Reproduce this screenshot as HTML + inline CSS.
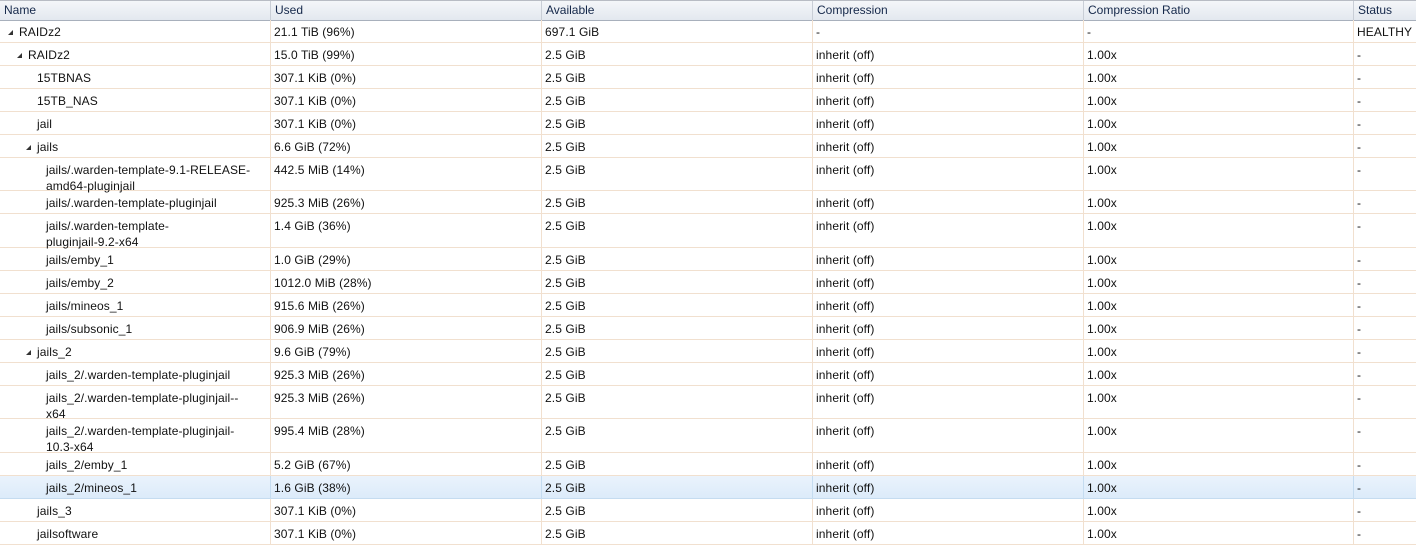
<!DOCTYPE html>
<html><head><meta charset="utf-8"><style>
body{margin:0;width:1416px;height:552px;background:#fff;overflow:hidden;font-family:"Liberation Sans",sans-serif;font-size:12px;color:#111;}
.hdr{position:absolute;left:0;top:0;width:1416px;height:19px;background:linear-gradient(#f4f6f9,#e3e8ef);border-top:1px solid #b8bcc4;border-bottom:1px solid #a8b0bc;}
.hdr div{position:absolute;top:0;height:19px;line-height:19px;color:#15284a;padding-left:4px;border-left:1px solid #c9ced6;box-sizing:border-box;font-family:"Liberation Sans",sans-serif;font-size:12px;}
.r{position:absolute;left:0;width:1416px;border-bottom:1px solid #f1e0cf;box-sizing:border-box;}
.r div{position:absolute;top:0;bottom:0;padding-top:4px;line-height:16px;padding-left:3px;border-left:1px solid #f1e0cf;box-sizing:border-box;font-family:"Liberation Sans",sans-serif;font-size:12px;letter-spacing:0.1px;}
.r div.n{border-left:none;padding-left:0}
.c0{left:0;width:270px}.c1{left:270px;width:271px}.c2{left:541px;width:271px}.c3{left:812px;width:271px}.c4{left:1083px;width:270px}.c5{left:1353px;width:63px}
.sel{background:linear-gradient(#eaf3fc,#dcebfa);border-bottom-color:#c5dcf0}
.sel div{border-left-color:#c5dcf0}
.a{display:inline-block;width:0;height:0;border-left:5px solid transparent;border-bottom:5px solid #333;margin-right:6px;vertical-align:1px}
</style></head><body>
<div class="hdr"><div class="c0" style="border-left:none">Name</div><div class="c1">Used</div><div class="c2">Available</div><div class="c3">Compression</div><div class="c4">Compression Ratio</div><div class="c5">Status</div></div>

<div class="r" style="top:20px;height:23px"><div class="n c0" style="padding-left:8px"><span class="a"></span>RAIDz2</div><div class="c1">21.1 TiB (96%)</div><div class="c2">697.1 GiB</div><div class="c3">-</div><div class="c4">-</div><div class="c5">HEALTHY</div></div>
<div class="r" style="top:43px;height:23px"><div class="n c0" style="padding-left:17px"><span class="a"></span>RAIDz2</div><div class="c1">15.0 TiB (99%)</div><div class="c2">2.5 GiB</div><div class="c3">inherit (off)</div><div class="c4">1.00x</div><div class="c5">-</div></div>
<div class="r" style="top:66px;height:23px"><div class="n c0" style="padding-left:37px">15TBNAS</div><div class="c1">307.1 KiB (0%)</div><div class="c2">2.5 GiB</div><div class="c3">inherit (off)</div><div class="c4">1.00x</div><div class="c5">-</div></div>
<div class="r" style="top:89px;height:23px"><div class="n c0" style="padding-left:37px">15TB_NAS</div><div class="c1">307.1 KiB (0%)</div><div class="c2">2.5 GiB</div><div class="c3">inherit (off)</div><div class="c4">1.00x</div><div class="c5">-</div></div>
<div class="r" style="top:112px;height:23px"><div class="n c0" style="padding-left:37px">jail</div><div class="c1">307.1 KiB (0%)</div><div class="c2">2.5 GiB</div><div class="c3">inherit (off)</div><div class="c4">1.00x</div><div class="c5">-</div></div>
<div class="r" style="top:135px;height:23px"><div class="n c0" style="padding-left:26px"><span class="a"></span>jails</div><div class="c1">6.6 GiB (72%)</div><div class="c2">2.5 GiB</div><div class="c3">inherit (off)</div><div class="c4">1.00x</div><div class="c5">-</div></div>
<div class="r" style="top:158px;height:33px"><div class="n c0" style="padding-left:46px">jails/.warden-template-9.1-RELEASE-<br>amd64-pluginjail</div><div class="c1">442.5 MiB (14%)</div><div class="c2">2.5 GiB</div><div class="c3">inherit (off)</div><div class="c4">1.00x</div><div class="c5">-</div></div>
<div class="r" style="top:191px;height:23px"><div class="n c0" style="padding-left:46px">jails/.warden-template-pluginjail</div><div class="c1">925.3 MiB (26%)</div><div class="c2">2.5 GiB</div><div class="c3">inherit (off)</div><div class="c4">1.00x</div><div class="c5">-</div></div>
<div class="r" style="top:214px;height:34px"><div class="n c0" style="padding-left:46px">jails/.warden-template-<br>pluginjail-9.2-x64</div><div class="c1">1.4 GiB (36%)</div><div class="c2">2.5 GiB</div><div class="c3">inherit (off)</div><div class="c4">1.00x</div><div class="c5">-</div></div>
<div class="r" style="top:248px;height:23px"><div class="n c0" style="padding-left:46px">jails/emby_1</div><div class="c1">1.0 GiB (29%)</div><div class="c2">2.5 GiB</div><div class="c3">inherit (off)</div><div class="c4">1.00x</div><div class="c5">-</div></div>
<div class="r" style="top:271px;height:23px"><div class="n c0" style="padding-left:46px">jails/emby_2</div><div class="c1">1012.0 MiB (28%)</div><div class="c2">2.5 GiB</div><div class="c3">inherit (off)</div><div class="c4">1.00x</div><div class="c5">-</div></div>
<div class="r" style="top:294px;height:23px"><div class="n c0" style="padding-left:46px">jails/mineos_1</div><div class="c1">915.6 MiB (26%)</div><div class="c2">2.5 GiB</div><div class="c3">inherit (off)</div><div class="c4">1.00x</div><div class="c5">-</div></div>
<div class="r" style="top:317px;height:23px"><div class="n c0" style="padding-left:46px">jails/subsonic_1</div><div class="c1">906.9 MiB (26%)</div><div class="c2">2.5 GiB</div><div class="c3">inherit (off)</div><div class="c4">1.00x</div><div class="c5">-</div></div>
<div class="r" style="top:340px;height:23px"><div class="n c0" style="padding-left:26px"><span class="a"></span>jails_2</div><div class="c1">9.6 GiB (79%)</div><div class="c2">2.5 GiB</div><div class="c3">inherit (off)</div><div class="c4">1.00x</div><div class="c5">-</div></div>
<div class="r" style="top:363px;height:23px"><div class="n c0" style="padding-left:46px">jails_2/.warden-template-pluginjail</div><div class="c1">925.3 MiB (26%)</div><div class="c2">2.5 GiB</div><div class="c3">inherit (off)</div><div class="c4">1.00x</div><div class="c5">-</div></div>
<div class="r" style="top:386px;height:33px"><div class="n c0" style="padding-left:46px">jails_2/.warden-template-pluginjail--<br>x64</div><div class="c1">925.3 MiB (26%)</div><div class="c2">2.5 GiB</div><div class="c3">inherit (off)</div><div class="c4">1.00x</div><div class="c5">-</div></div>
<div class="r" style="top:419px;height:34px"><div class="n c0" style="padding-left:46px">jails_2/.warden-template-pluginjail-<br>10.3-x64</div><div class="c1">995.4 MiB (28%)</div><div class="c2">2.5 GiB</div><div class="c3">inherit (off)</div><div class="c4">1.00x</div><div class="c5">-</div></div>
<div class="r" style="top:453px;height:23px"><div class="n c0" style="padding-left:46px">jails_2/emby_1</div><div class="c1">5.2 GiB (67%)</div><div class="c2">2.5 GiB</div><div class="c3">inherit (off)</div><div class="c4">1.00x</div><div class="c5">-</div></div>
<div class="r sel" style="top:476px;height:23px"><div class="n c0" style="padding-left:46px">jails_2/mineos_1</div><div class="c1">1.6 GiB (38%)</div><div class="c2">2.5 GiB</div><div class="c3">inherit (off)</div><div class="c4">1.00x</div><div class="c5">-</div></div>
<div class="r" style="top:499px;height:23px"><div class="n c0" style="padding-left:37px">jails_3</div><div class="c1">307.1 KiB (0%)</div><div class="c2">2.5 GiB</div><div class="c3">inherit (off)</div><div class="c4">1.00x</div><div class="c5">-</div></div>
<div class="r" style="top:522px;height:23px"><div class="n c0" style="padding-left:37px">jailsoftware</div><div class="c1">307.1 KiB (0%)</div><div class="c2">2.5 GiB</div><div class="c3">inherit (off)</div><div class="c4">1.00x</div><div class="c5">-</div></div>
</body></html>
